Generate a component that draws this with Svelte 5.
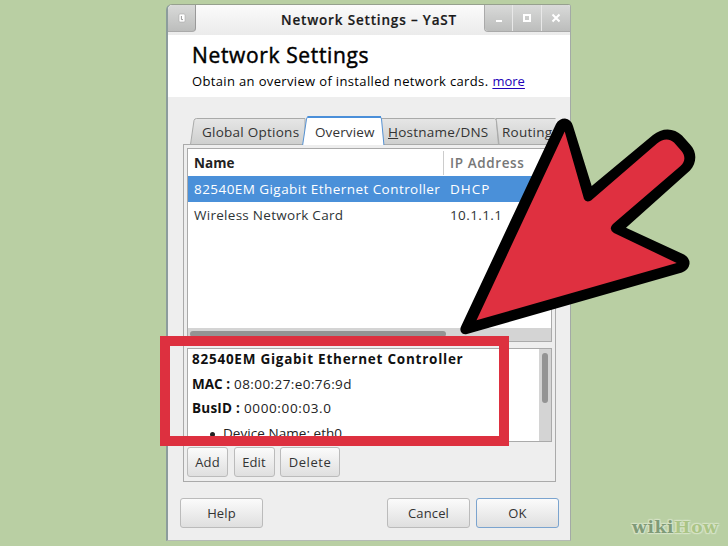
<script>
  const rows = [
    { name: '82540EM Gigabit Ethernet Controller', ip: 'DHCP', selected: true },
    { name: 'Wireless Network Card', ip: '10.1.1.1', selected: false }
  ];
</script>

<main>
  <section class="window">
    <header class="titlebar">
      <div class="wm menu">
        <svg width="8" height="10" viewBox="0 0 8 10"><rect x="1" y="1" width="6" height="8" rx="1" fill="#fff" stroke="#aaa" stroke-width=".6" /><path d="M3.4 3v3.6h1.6" fill="none" stroke="#999" /></svg>
      </div>
      <div class="title"><span>Network Settings – YaST</span></div>
      <div class="controls">
        <div class="wm"><svg width="10" height="10"><path d="M2 8h6" stroke="#fff" stroke-width="2" /></svg></div>
        <div class="wm"><svg width="10" height="10"><rect x="2" y="2" width="6" height="6" fill="none" stroke="#fff" stroke-width="2" /></svg></div>
        <div class="wm"><svg width="10" height="10"><path d="M1.5 1.5l7 7m0-7l-7 7" stroke="#fff" stroke-width="2" /></svg></div>
      </div>
    </header>

    <div class="intro">
      <h1><span>Network Settings</span></h1>
      <p><span class="desc">Obtain an overview of installed network cards.</span><a href="#more">more</a></p>
    </div>

    <div class="body">
      <nav class="tabs">
        <svg class="shapes" width="374" height="31" viewBox="0 0 374 31">
          <defs>
            <linearGradient id="tab" x1="0" y1="0" x2="0" y2="1">
              <stop offset="0" stop-color="#e6e6e6" /><stop offset="1" stop-color="#cecfce" />
            </linearGradient>
          </defs>
          <path d="M7.5 29.500L11 5.500Q11.500 3.500 13.500 3.500H122V29.500z" fill="url(#tab)" stroke="#a9aaa9" />
          <path d="M195 3.500H311.500Q313 3.500 313.300 5.500L315.500 29.500H198z" fill="url(#tab)" stroke="#a9aaa9" />
          <path d="M372.500 3.500H313Q313.500 5 313.700 8L316 29.500H372.500" fill="url(#tab)" stroke="#a9aaa9" />
          <path d="M119.500 31L123.500 4Q124 1.500 126 1.500H196Q198 1.500 198.500 4L201 31z" fill="#fff" stroke="#5591d2" />
          <path d="M124.500 2H198" stroke="#4a8fd9" stroke-width="2" />
        </svg>
        <div class="tab t1"><span>Global Options</span></div>
        <div class="tab t2"><span>Overview</span></div>
        <div class="tab t3"><span><u>H</u>ostname/DNS</span></div>
        <div class="tab t4"><span>Routing</span></div>
      </nav>

      <div class="pane">
        <div class="table">
          <div class="row head"><span class="name">Name</span><span class="ip">IP Address</span></div>
          {#each rows as row, i}
            <div class="row r{i}" class:selected={row.selected}>
              <span class="name">{row.name}</span><span class="ip">{row.ip}</span>
            </div>
          {/each}
          <div class="hscroll"><i></i></div>
        </div>

        <div class="details">
          <div class="info">
            <div class="line l1"><b>82540EM Gigabit Ethernet Controller</b></div>
            <div class="line l2"><b>MAC :</b><span>08:00:27:e0:76:9d</span></div>
            <div class="line l3"><b>BusID :</b><span>0000:00:03.0</span></div>
            <div class="line l4"><em></em><span>Device Name: eth0</span></div>
          </div>
          <div class="vscroll"><i></i></div>
        </div>

        <div class="actions">
          <button class="add">Add</button>
          <button class="edit">Edit</button>
          <button class="del">Delete</button>
        </div>
      </div>

      <footer>
        <button class="help">Help</button>
        <button class="cancel">Cancel</button>
        <button class="ok">OK</button>
      </footer>
    </div>
  </section>

  <div class="frame"></div>
  <svg class="arrow" width="728" height="546" viewBox="0 0 728 546">
    <path fill="#000" d="M556 124Q559 118.500 565 118.500Q571 119 573 126L591.700 186L653 135C662 127.500 674 127.500 682 135.500L690.500 145C697 152 697 163 690 170.500L626 227.700L684 254.500Q690 258 689.500 264Q688.500 270 682 272.500L467 334Q463 335 461 332Q459.500 329 461.500 325.500Z" />
    <path fill="#df3040" d="M564.700 131.500L584 199Q586 203 591 200.500L657 143.500C663 138.500 669 138 674 142.500L681.500 151C685.500 156 685.500 161.500 680.500 166L613 224Q608 229 614 233L676.700 263L476.500 320.300Z" />
  </svg>
  <div class="brand"><span class="wiki">wiki</span><span class="how">How</span></div>
</main>

<style>
  :global(body) { margin: 0; }
  main { position: relative; box-sizing: border-box; width: 728px; height: 546px; padding: 4px 0 0 166px; overflow: hidden; background: #b9cfa3; font: 13px/18px "Open Sans", "Noto Sans", sans-serif; color: #2e3436; white-space: nowrap; }
  .window { box-sizing: border-box; width: 405px; height: 537px; display: flex; flex-direction: column; border: 1px solid #a3aaa6; border-left: 2px solid #8c9c9c; border-top-color: #96a08e; border-bottom-color: #b5bbb5; border-radius: 6px 3px 0 0; background: #eee; overflow: hidden; }
  .titlebar { display: flex; height: 30px; justify-content: space-between; align-items: flex-start; background: linear-gradient(#fbfbfb, #ebebeb); }
  .title { flex: 1; padding: 6px 0 0 85px; font-size: 13.500px; font-weight: 600; color: #1a1a1a; letter-spacing: .83px; -webkit-text-stroke: .2px; }
  .wm { box-sizing: border-box; width: 28px; height: 27px; display: flex; align-items: center; justify-content: center; background: linear-gradient(#d9dad9, #bcbdbc); }
  .menu { border-right: 1px solid #999; border-bottom: 1px solid #aaa; border-radius: 0 0 4px 0; }
  .controls { display: flex; border: 1px solid #aaa; border-width: 0 0 1px 1px; border-radius: 0 0 0 4px; overflow: hidden; }
  .controls .wm { width: 29px; height: 26px; border-left: 1px solid #e8e8e8; }
  .controls .wm:first-child { width: 27px; border-left: 0; }
  .intro { box-sizing: border-box; height: 62px; padding: 6px 0 0 24px; background: #fff; color: #000; }
  h1 { margin: 0; font-size: 21px; line-height: 28px; font-weight: 400; letter-spacing: .64px; -webkit-text-stroke: .45px #000; }
  p { margin: 3px 0 0; display: flex; gap: 4px; }
  .desc { letter-spacing: .35px; }
  a { color: #2200b8; text-decoration: underline; text-underline-offset: 2px; }
  .body { padding: 18px 0 0 15px; }
  .tabs { position: relative; height: 30px; width: 373px; display: flex; overflow: hidden; }
  .shapes { position: absolute; left: 0; top: 0; }
  .tab { position: relative; box-sizing: border-box; flex: none; padding-top: 8px; color: #333; font-size: 13.500px; letter-spacing: .25px; }
  .t1 { margin-left: 19px; width: 113px; }
  .t2 { width: 73px; letter-spacing: .12px; }
  .t3 { width: 114px; }
  .pane { box-sizing: border-box; width: 373px; height: 338px; margin-top: -1px; padding: 3px 3px 0; border: 1px solid #aaa; }
  .table { box-sizing: border-box; width: 365px; height: 194px; border: 1px solid #aaa; background: #fff; display: flex; flex-direction: column; }
  .row { height: 26px; display: flex; align-items: center; font-size: 13.500px; }
  .row.head { height: 27px; font-weight: 700; color: #222; letter-spacing: .05px; }
  .name { box-sizing: border-box; width: 255px; padding-left: 6px; }
  .ip { padding-left: 7px; }
  .head .ip { height: 24px; line-height: 25px; padding-left: 6px; border-left: 1px solid #ccc; font-weight: 600; color: #777; letter-spacing: .6px; }
  .selected { background: #4a90d9; color: #fff; }
  .r0 .name { letter-spacing: .44px; }
  .r0 .ip { letter-spacing: 1px; }
  .r1 { letter-spacing: .28px; }
  .r1 .ip { letter-spacing: .4px; }
  .hscroll { box-sizing: border-box; margin-top: auto; height: 13px; padding: 3px 2px; background: #d4d4d4; }
  .hscroll i { display: block; width: 256px; height: 6px; border-radius: 3px; background: #949494; }
  .details { box-sizing: border-box; width: 365px; height: 94px; margin-top: 6px; display: flex; border: 1px solid #aaa; background: #fff; overflow: hidden; }
  .info { flex: 1; padding-left: 4px; color: #222; font-size: 13.500px; }
  .line { height: 24.500px; line-height: 21px; display: flex; gap: 4px; }
  .line b { color: #111; }
  .l1 b { letter-spacing: .75px; }
  .l2 b { letter-spacing: 0; }
  .l2 span { letter-spacing: .42px; }
  .l3 b { letter-spacing: .22px; }
  .l3 span { letter-spacing: .62px; }
  .l4 span { letter-spacing: .05px; }
  .line em { width: 5px; height: 5px; border-radius: 50%; background: #222; margin: 9px 4px 0 18px; }
  .vscroll { box-sizing: border-box; width: 12px; padding: 4px 3px; background: #d4d4d4; }
  .vscroll i { display: block; width: 6px; height: 50px; border-radius: 3px; background: #949494; }
  .actions { display: flex; gap: 5.500px; margin-top: 5px; }
  button { box-sizing: border-box; height: 30px; padding: 0; border: 1px solid #bbb; border-radius: 3px; background: linear-gradient(#fbfbfb, #dfdfdf); font: inherit; color: #333; letter-spacing: .15px; }
  .add, .edit { width: 41px; }
  .del { width: 60px; letter-spacing: .55px; }
  footer { display: flex; margin: 16px 0 0 -3px; }
  .help, .cancel, .ok { width: 83px; }
  .cancel { margin: 0 6px 0 124px; }
  .ok { border-color: #7ba4cf; }
  .frame { position: absolute; box-sizing: border-box; left: 160px; top: 336px; width: 349px; height: 110px; border: 10px solid #dd303f; }
  .arrow { position: absolute; left: 0; top: 0; }
  .brand { position: absolute; left: 632px; top: 516px; font: 700 17px/22px "DejaVu Serif", serif; letter-spacing: .75px; text-shadow: 0 0 2px #dbe7cd, 1px 1px 1px #d5e2c5, -1px -1px 1px #d5e2c5, 1px -1px 1px #d5e2c5, -1px 1px 1px #d5e2c5; }
  .wiki { color: #7f9b78; }
  .how { color: #aac486; }
</style>
